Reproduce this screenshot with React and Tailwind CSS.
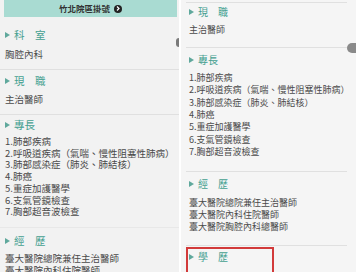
import React from "react";

const FONT = { fontFamily: '"Noto Sans CJK TC", "Noto Sans", sans-serif' };

function Tri() {
  return (
    <svg width="5" height="6" viewBox="0 0 5 6" className="shrink-0">
      <path d="M0 0 L5 3 L0 6 Z" fill="#5fa89c" />
    </svg>
  );
}

function Heading({ children, size }) {
  return (
    <div className={`flex items-center gap-[4px] h-[14px] text-[#44a090] ${size}`}>
      <Tri />
      <span className="leading-[14px]">{children}</span>
    </div>
  );
}

export default function App() {
  const items = [
    "1.肺部疾病",
    "2.呼吸道疾病（氣喘、慢性阻塞性肺病）",
    "3.肺部感染症（肺炎、肺結核）",
    "4.肺癌",
    "5.重症加護醫學",
    "6.支氣管鏡檢查",
    "7.胸部超音波檢查",
  ];
  return (
    <div className="flex w-[356px] h-[272px] overflow-hidden bg-white" style={FONT}>
      {/* Left panel */}
      <div className="relative w-[179px] h-full bg-[#f2f2f2] overflow-hidden shrink-0">
        <div className="ml-[4px] mr-[2px] h-[17px] bg-[#a9dbd2] flex items-center justify-center gap-[4px]">
          <span className="text-[8.5px] font-bold text-[#333] leading-none">竹北院區掛號</span>
          <span className="w-[8px] h-[8px] rounded-full bg-[#222] flex items-center justify-center">
            <svg width="4" height="5" viewBox="0 0 4 5">
              <path d="M1 0.5 L3 2.5 L1 4.5" stroke="white" strokeWidth="1.2" fill="none" />
            </svg>
          </span>
        </div>
        <div className="pl-[5px] pt-[11px] pb-[9px] border-b border-[#e0e0e0]">
          <Heading size="text-[10.5px]">科　室</Heading>
          <div className="mt-[6px] text-[9.5px] leading-[12px] text-[#4a4a4a]">胸腔內科</div>
        </div>
        <div className="pl-[5px] pt-[4px] pb-[9px] border-b border-[#e0e0e0]">
          <Heading size="text-[10.5px]">現　職</Heading>
          <div className="mt-[5px] text-[9.5px] leading-[12px] text-[#4a4a4a]">主治醫師</div>
        </div>
        <div className="pl-[5px] pt-[3px] pb-[9px] border-b border-[#e8e8e8]">
          <Heading size="text-[10.5px]">專長</Heading>
          <div className="mt-[4px] text-[9.5px] leading-[11.7px] text-[#4a4a4a]">
            {items.map((t) => (
              <div key={t}>{t}</div>
            ))}
          </div>
        </div>
        <div className="pl-[5px] pt-[6px]">
          <Heading size="text-[10.5px]">經　歷</Heading>
          <div className="mt-[4px] text-[9.5px] leading-[12px] text-[#4a4a4a]">
            <div>臺大醫院總院兼任主治醫師</div>
            <div>臺大醫院內科住院醫師</div>
          </div>
        </div>
        <div className="absolute right-0 top-[38px] w-[3px] h-[9px] rounded-l-full bg-[#7a7a7a]" />
      </div>
      {/* Right panel */}
      <div className="relative flex-1 h-full bg-[#f5f5f5] overflow-hidden ml-[2px]">
        <div className="mt-[2px] ml-[5px] mr-[9px] border-t border-[#e0e0e0]">
          <div className="pl-[3px] pt-[2px] pb-[11px] border-b border-[#e0e0e0]">
            <Heading size="text-[10px]">現　職</Heading>
            <div className="mt-[5px] text-[9px] leading-[12px] text-[#4a4a4a]">主治醫師</div>
          </div>
          <div className="pl-[3px] pt-[5px] pb-[13px] border-b border-[#e0e0e0]">
            <Heading size="text-[10px]">專長</Heading>
            <div className="mt-[5px] text-[9px] leading-[12.33px] text-[#4a4a4a]">
              {items.map((t) => (
                <div key={t}>{t}</div>
              ))}
            </div>
          </div>
          <div className="pl-[3px] pt-[5px] pb-[12px] border-b border-[#e0e0e0]">
            <Heading size="text-[10px]">經　歷</Heading>
            <div className="mt-[6px] text-[9px] leading-[12px] text-[#4a4a4a]">
              <div>臺大醫院總院兼任主治醫師</div>
              <div>臺大醫院內科住院醫師</div>
              <div>臺大醫院胸腔內科總醫師</div>
            </div>
          </div>
          <div className="pl-[3px] pt-[4px]">
            <Heading size="text-[10px]">學　歷</Heading>
          </div>
        </div>
        <div className="absolute left-[5px] top-[247px] w-[88px] h-[40px] border-2 border-[#d23a3a]" />
        <div className="absolute right-0 top-[43px] w-[9px] h-[10px] rounded-l-full bg-[#8a8a8a]" />
      </div>
    </div>
  );
}
